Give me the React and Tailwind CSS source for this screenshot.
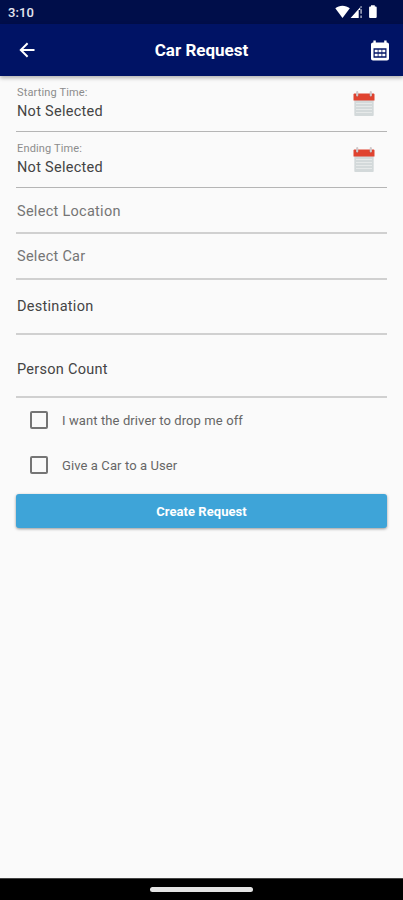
import { useState } from 'react'

const TIMES = [
  { id: 'start', label: 'Starting Time:', value: 'Not Selected' },
  { id: 'end', label: 'Ending Time:', value: 'Not Selected' },
]

const FIELDS = [
  { id: 'location', label: 'Select Location', className: 'h-[46px] pt-[13px] text-[#757575]' },
  { id: 'car', label: 'Select Car', className: 'h-[46px] pt-3 text-[#757575]' },
  { id: 'destination', label: 'Destination', className: 'h-[55px] pt-4 text-[#444444]' },
  { id: 'persons', label: 'Person Count', className: 'h-[63px] pt-6 text-[#444444]' },
]

const OPTIONS = [
  { id: 'driver', label: 'I want the driver to drop me off' },
  { id: 'user', label: 'Give a Car to a User' },
]

function StatusBar() {
  return (
    <div className="flex h-6 shrink-0 items-center justify-between bg-[#000e4a] pl-2 pr-[25px] text-white">
      <span className="text-[13px] font-medium leading-none tracking-[0.1px] text-[#e4e6f0]">3:10</span>
      <svg viewBox="0 0 43 14" className="h-3.5 w-[43px]" fill="currentColor">
        <path d="M.3 3.200C4.200-.2 10.600-.2 14.800 3.200L7.500 13z" />
        <path d="M15.600 13 25.200 2.200v2.800h-1.500v8z" />
        <path d="M25.400 1.200h1.400v1.600h-1.400zM25.400 4.200h1.400v4.600h-1.400zM25.400 10.600h1.400V13h-1.400z" opacity=".7" />
        <path d="M36 .300h3.800v1.300h1c.500 0 .9.400.9.900v9.600c0 .5-.4.9-.9.900h-5.800c-.5 0-.9-.4-.9-.9V2.500c0-.5.400-.9.900-.9h1z" />
      </svg>
    </div>
  )
}

function RedCalendar() {
  return (
    <svg viewBox="0 0 22 26" className="h-[26px] w-[22px] shrink-0">
      <path d="M1.300 9h19.400v15.200c0 .500-.400.800-.800.800H2.100c-.500 0-.800-.400-.800-.800z" fill="#d3d9da" />
      <path d="M3 12.500h16M3 15.500h16M3 18.500h16M3 21.500h16" stroke="#e6e9e9" strokeWidth="1" />
      <path d="M.500 3.600c0-.700.500-1.200 1.200-1.200h18.600c.700 0 1.200.500 1.200 1.200V9.400H.500z" fill="#e0432f" />
      <circle cx="4.200" cy="4.100" r="1.700" fill="#c23a2d" />
      <circle cx="17.800" cy="4.100" r="1.700" fill="#c23a2d" />
      <path d="M4.200 1.200v3.200M17.800 1.200v3.200" stroke="#cfc8ca" strokeWidth="2.200" strokeLinecap="round" />
    </svg>
  )
}

export default function App() {
  const [checked, setChecked] = useState({})

  const toggle = (id) => setChecked((c) => ({ ...c, [id]: !c[id] }))

  return (
    <div className="flex h-[900px] w-[403px] flex-col overflow-hidden bg-[#fafafa] font-['Roboto',sans-serif]">
      <StatusBar />

      <header className="z-10 grid h-[52px] shrink-0 grid-cols-[60px_1fr_60px] items-center bg-[#001365] text-white shadow-[0_2px_4px_rgba(0,0,0,0.3)]">
        <button type="button" className="pl-[19px]" aria-label="Back">
          <svg viewBox="0 0 16 16" className="h-4 w-4" fill="none" stroke="currentColor" strokeWidth="2">
            <path d="M15.500 8H2M8.600 1.200 1.800 8l6.800 6.800" />
          </svg>
        </button>
        <h1 className="pt-0.5 text-center text-[17px] font-bold">Car Request</h1>
        <button type="button" className="flex justify-end pr-3.5" aria-label="Calendar">
          <svg viewBox="0 0 18 21" className="h-[21px] w-[18px]" fill="currentColor">
            <path
              fillRule="evenodd"
              d="M2.400.500h2.400v2h8.400v-2h2.400v2h.400c1.100 0 2 .9 2 2v14c0 1.100-.9 2-2 2H2c-1.100 0-2-.9-2-2v-14c0-1.100.9-2 2-2h.400zM2.500 8.300v9.500h13V8.300z"
            />
            <path d="M3.700 9.700h3v2.500h-3zM7.500 9.700h3v2.500h-3zM11.300 9.700h3v2.500h-3zM3.700 13.700h3v2.500h-3zM7.500 13.700h3v2.500h-3zM11.300 13.700h3v2.500h-3z" />
          </svg>
        </button>
      </header>

      <main className="flex-1 px-4">
        {TIMES.map((t) => (
          <div key={t.id} className="flex h-14 items-start justify-between border-b border-[#b5b5b5] pr-3">
            <div className="pl-px pt-[11px]">
              <p className="text-[11px] leading-3 tracking-[0.15px] text-[#8c8c8c]">{t.label}</p>
              <p className="mt-[3px] text-[14.500px] leading-5 tracking-[0.280px] text-[#444444]">{t.value}</p>
            </div>
            <div className="pt-[15px]">
              <RedCalendar />
            </div>
          </div>
        ))}

        {FIELDS.map((f) => (
          <div
            key={f.id}
            className={`border-b-2 border-[#d0d0d0] pl-px text-[14.500px] leading-[22px] tracking-[0.280px] ${f.className}`}
          >
            {f.label}
          </div>
        ))}

        {OPTIONS.map((o) => (
          <label key={o.id} className="flex h-[45px] items-center pl-3.5 text-[13px] tracking-[0.1px] text-[#666666]">
            <input
              type="checkbox"
              checked={!!checked[o.id]}
              onChange={() => toggle(o.id)}
              className="mb-px mr-3.5 h-[18px] w-[18px] appearance-none rounded-[2px] border-2 border-[#757575] checked:bg-[#3ea4d8]"
            />
            {o.label}
          </label>
        ))}

        <button
          type="button"
          className="mt-1.5 h-[34px] w-full rounded-[3px] bg-[#3ea4d8] pt-px text-[13px] font-bold tracking-[0.05px] text-white shadow-[0_1px_3px_rgba(0,0,0,0.4)]"
        >
          Create Request
        </button>
      </main>

      <footer className="flex h-[22px] shrink-0 items-center justify-center border-t border-[#444] bg-black">
        <div className="h-[5px] w-[103px] rounded-full bg-[#e4e4e4]" />
      </footer>
    </div>
  )
}
